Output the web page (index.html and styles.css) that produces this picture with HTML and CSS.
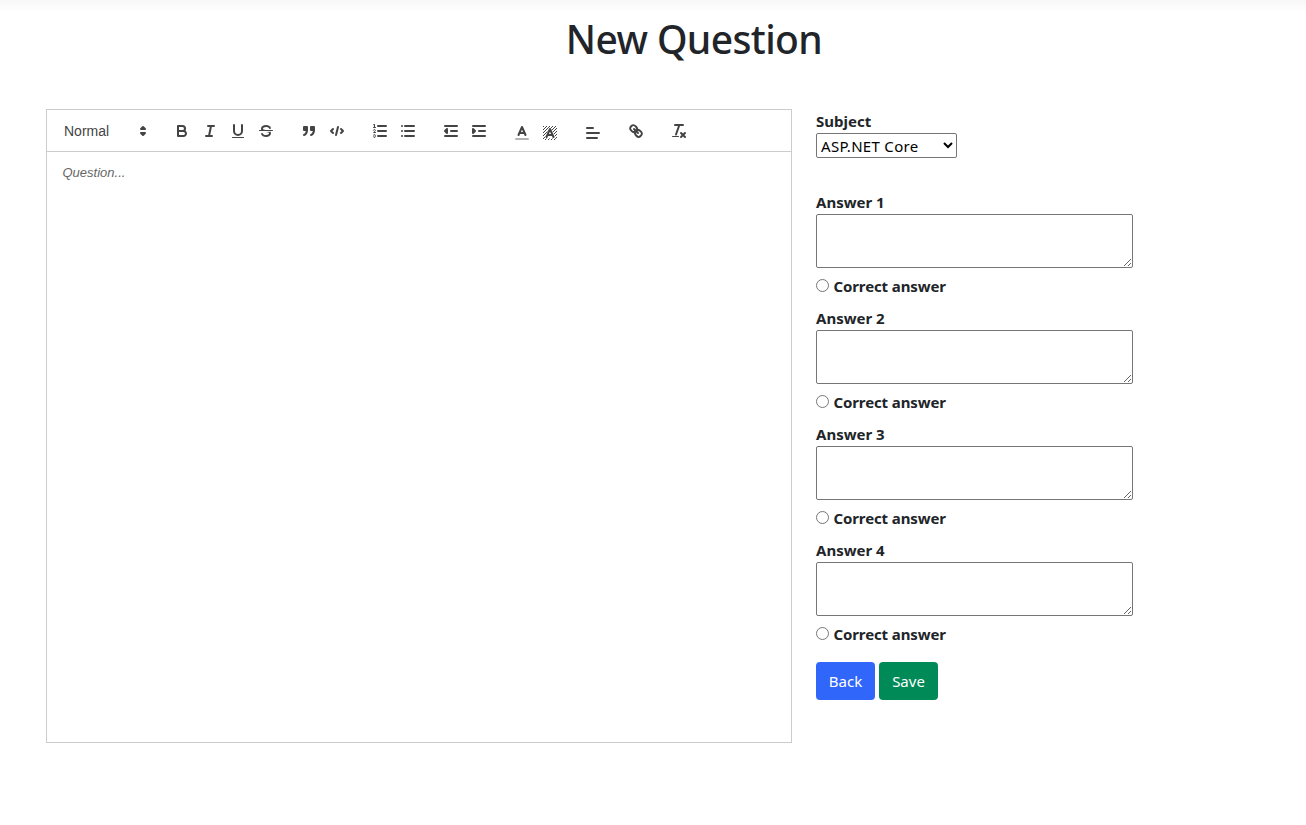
FILE: index.html
```html
<!DOCTYPE html>
<html lang="en">
<head>
<meta charset="utf-8">
<title>New Question</title>
<link rel="stylesheet" href="styles.css">
</head>
<body>
<div class="top-shadow"></div>
<h1 class="title"><span>New Question</span></h1>
<main class="layout">
  <section class="editor">
    <div class="toolbar">
      <div class="group"><div class="picker"><span>Normal</span><svg viewBox="0 0 18 18"><polygon class="st" points="7 11 9 13 11 11"/><polygon class="st" points="7 7 9 5 11 7"/></svg></div></div>
      <div class="group">
        <button class="tool"><svg viewBox="0 0 18 18"><path class="st" d="M5,4H9.5A2.5,2.5,0,0,1,12,6.5v0A2.5,2.5,0,0,1,9.5,9H5V4Z"/><path class="st" d="M5,9h5.5A2.5,2.5,0,0,1,13,11.5v0A2.5,2.5,0,0,1,10.5,14H5V9Z"/></svg></button>
        <button class="tool"><svg viewBox="0 0 18 18"><path class="st" d="M7 4H13M5 14H11M8 14L10 4"/></svg></button>
        <button class="tool"><svg viewBox="0 0 18 18"><path class="st" d="M5,3V9a4.012,4.012,0,0,0,4,4H9a4.012,4.012,0,0,0,4-4V3"/><rect class="fl" height="1" rx=".5" ry=".5" width="12" x="3" y="15"/></svg></button>
        <button class="tool"><svg viewBox="0 0 18 18"><path class="st thin" d="M15.5 8.5H2.5"/><path class="fl" d="M9.007,8C6.542,7.791,6,7.519,6,6.5,6,5.792,7.283,5,9,5c1.571,0,2.765.679,2.969,1.309a1,1,0,0,0,1.9-.617C13.356,4.106,11.354,3,9,3,6.2,3,4,4.538,4,6.5a3.2,3.2,0,0,0,.5,1.843Z"/><path class="fl" d="M8.984,10C11.457,10.208,12,10.479,12,11.5c0,.708-1.283,1.5-3,1.5-1.571,0-2.765-.679-2.969-1.309a1,1,0,1,0-1.9.617C4.644,13.894,6.646,15,9,15c2.8,0,5-1.538,5-3.5a3.2,3.2,0,0,0-.5-1.843Z"/></svg></button>
      </div>
      <div class="group">
        <button class="tool"><svg viewBox="0 0 18 18"><rect class="fl st" height="3" width="3" x="4" y="5"/><rect class="fl st" height="3" width="3" x="11" y="5"/><path class="fl st" d="M7,8c0,4.031-3,5-3,5"/><path class="fl st" d="M14,8c0,4.031-3,5-3,5"/></svg></button>
        <button class="tool"><svg viewBox="0 0 18 18"><path class="st" d="M5 7L3 9L5 11M13 7L15 9L13 11M10 5L8 13"/></svg></button>
      </div>
      <div class="group">
        <button class="tool"><svg viewBox="0 0 18 18"><path class="st" d="M7 4H15M7 9H15M7 14H15"/><path class="st thin" d="M2.5 5.5H4.5"/><path class="fl" d="M3.5,6A0.5,0.5,0,0,1,3,5.5V3.085l-0.276.138A0.5,0.5,0,0,1,2.053,3c-0.124-.247-0.023-0.324.224-0.447l1-.5A0.5,0.5,0,0,1,4,2.5v3A0.5,0.5,0,0,1,3.5,6Z"/><path class="st thin" d="M4.5,10.5h-2c0-.234,1.85-1.076,1.85-2.234A0.959,0.959,0,0,0,2.5,8.156"/><path class="st thin" d="M2.5,14.846a0.959,0.959,0,0,0,1.85-.109A0.7,0.7,0,0,0,3.75,14a0.688,0.688,0,0,0,.6-0.736,0.959,0.959,0,0,0-1.85-.109"/></svg></button>
        <button class="tool"><svg viewBox="0 0 18 18"><path class="st" d="M6 4H15M6 9H15M6 14H15M3 4H3.01M3 9H3.01M3 14H3.01"/></svg></button>
      </div>
      <div class="group">
        <button class="tool"><svg viewBox="0 0 18 18"><path class="st" d="M3 14H15M3 4H15M9 9H15"/><polygon class="fl st" points="5 7 5 11 3 9"/></svg></button>
        <button class="tool"><svg viewBox="0 0 18 18"><path class="st" d="M3 14H15M3 4H15M9 9H15"/><polygon class="fl st" points="3 7 3 11 5 9"/></svg></button>
      </div>
      <div class="group">
        <button class="tool low"><svg viewBox="0 0 18 18"><path class="st faded" d="M3 15H15"/><path class="st" d="M5.5 11L9 3L12.5 11M11.63 9H6.38"/></svg></button>
        <button class="tool low"><svg viewBox="0 0 18 18"><defs><clipPath id="field"><path clip-rule="evenodd" d="M2 2H16V16H2ZM8 3.5L3.5 14.5H14.5L10 3.5Z"/></clipPath></defs><path class="st hatch" clip-path="url(#field)" d="M1 4L4 1M1 7L7 1M1 10L10 1M1 13L13 1M1 16L16 1M2 18L18 2M5 18L18 5M8 18L18 8M11 18L18 11M14 18L18 14"/><path class="st" d="M5.5 13L9 5L12.5 13M11.63 11H6.38"/></svg></button>
      </div>
      <div class="group"><button class="tool low"><svg viewBox="0 0 18 18"><path class="st" d="M3 9H15M3 14H13M3 4H9"/></svg></button></div>
      <div class="group"><button class="tool"><svg viewBox="0 0 18 18"><path class="st" d="M7 7L11 11"/><path class="st" d="M8.9,4.577a3.476,3.476,0,0,1,.36,4.679A3.476,3.476,0,0,1,4.577,8.9C3.185,7.5,2.035,6.4,4.217,4.217S7.5,3.185,8.9,4.577Z"/><path class="st" d="M13.423,9.1a3.476,3.476,0,0,0-4.679-.36,3.476,3.476,0,0,0,.36,4.679c1.392,1.392,2.5,2.542,4.679.36S14.815,10.5,13.423,9.1Z"/></svg></button></div>
      <div class="group"><button class="tool"><svg viewBox="0 0 18 18"><path class="st" d="M5 3H13M6 12.5L9.35 3M11 11L15 15M15 11L11 15"/><rect class="fl" height="1" rx="0.5" ry="0.5" width="7" x="2" y="14"/></svg></button></div>
    </div>
    <div class="question">Question...</div>
  </section>
  <form class="form">
    <label class="caption" for="subject">Subject</label>
    <select class="subject" id="subject"><option>ASP.NET Core</option></select>
    <div class="answer"><label class="caption">Answer 1</label><textarea class="text"></textarea><label class="correct"><input type="radio" name="correct"><span class="caption">Correct answer</span></label></div>
    <div class="answer"><label class="caption">Answer 2</label><textarea class="text"></textarea><label class="correct"><input type="radio" name="correct"><span class="caption">Correct answer</span></label></div>
    <div class="answer"><label class="caption">Answer 3</label><textarea class="text"></textarea><label class="correct"><input type="radio" name="correct"><span class="caption">Correct answer</span></label></div>
    <div class="answer"><label class="caption">Answer 4</label><textarea class="text"></textarea><label class="correct"><input type="radio" name="correct"><span class="caption">Correct answer</span></label></div>
    <div class="actions"><button type="button" class="btn back">Back</button><button type="button" class="btn save">Save</button></div>
  </form>
</main>
</body>
</html>
```
FILE: styles.css
```css
* { box-sizing: border-box; }
body { margin: 0; height: 825px; overflow: hidden; background: #fff; color: #212529; font: 16px/24px "Noto Sans", "Open Sans", sans-serif; }
.top-shadow { height: 12px; background: linear-gradient(#f7f7f7, #fff); }
.title { margin: 3px 0 0 82px; height: 48px; text-align: center; font-size: 39px; line-height: 48px; font-weight: 500; letter-spacing: -0.6px; }
.layout { display: flex; align-items: flex-start; gap: 24px; margin: 46px 0 0 46px; }
.editor { width: 746px; height: 634px; border: 1px solid #ccc; font-family: "Liberation Sans", Arial, sans-serif; }
.toolbar { display: flex; gap: 15px; height: 42px; padding: 9px 8px 8px; border-bottom: 1px solid #ccc; }
.group { display: flex; height: 24px; }
.picker { display: flex; align-items: center; justify-content: space-between; width: 98px; padding: 0 1px 0 9px; color: #444; font-size: 14px; font-weight: 500; }
.picker svg { width: 18px; height: 18px; }
.tool { width: 28px; height: 24px; padding: 3px 5px; border: 0; background: none; }
.tool svg { display: block; width: 18px; height: 18px; }
.low { padding-top: 5px; padding-bottom: 1px; }
.st { fill: none; stroke: #444; stroke-width: 2; stroke-linecap: round; stroke-linejoin: round; }
.fl { fill: #444; }
.thin { stroke-width: 1; }
.hatch { stroke-width: 1; stroke-linecap: butt; }
.faded { opacity: .4; }
.picker polygon { fill: #444; }
.question { padding: 12px 15.5px; font-size: 13px; line-height: 18px; font-style: italic; color: #666; }
.form { display: flex; flex-direction: column; align-items: flex-start; width: 318px; }
.caption { display: block; height: 24px; font-size: 15px; line-height: 24px; font-weight: 700; white-space: nowrap; }
.subject { width: 141px; height: 25px; margin-bottom: 32px; padding: 0; border: 1px solid #767676; border-radius: 2px; background: #fff; color: #000; font: 15px "Noto Sans", sans-serif; letter-spacing: .3px; }
.answer { height: 116px; }
.text { display: block; width: 317px; height: 54px; margin: 0; border: 1px solid #767676; border-radius: 2px; background: #fff; }
.correct { display: flex; gap: 4.5px; margin-top: 6px; }
.correct .caption { letter-spacing: -.12px; }
.correct input { width: 13px; height: 13px; margin: 5px 0 0; }
.actions { display: flex; gap: 4px; margin-top: 8px; }
.btn { width: 59px; height: 38px; padding: 0; border: 0; border-radius: 4px; color: #fff; font: 15px/38px "Noto Sans", sans-serif; }
.back { background: #3166fa; }
.save { background: #008a57; }
```
